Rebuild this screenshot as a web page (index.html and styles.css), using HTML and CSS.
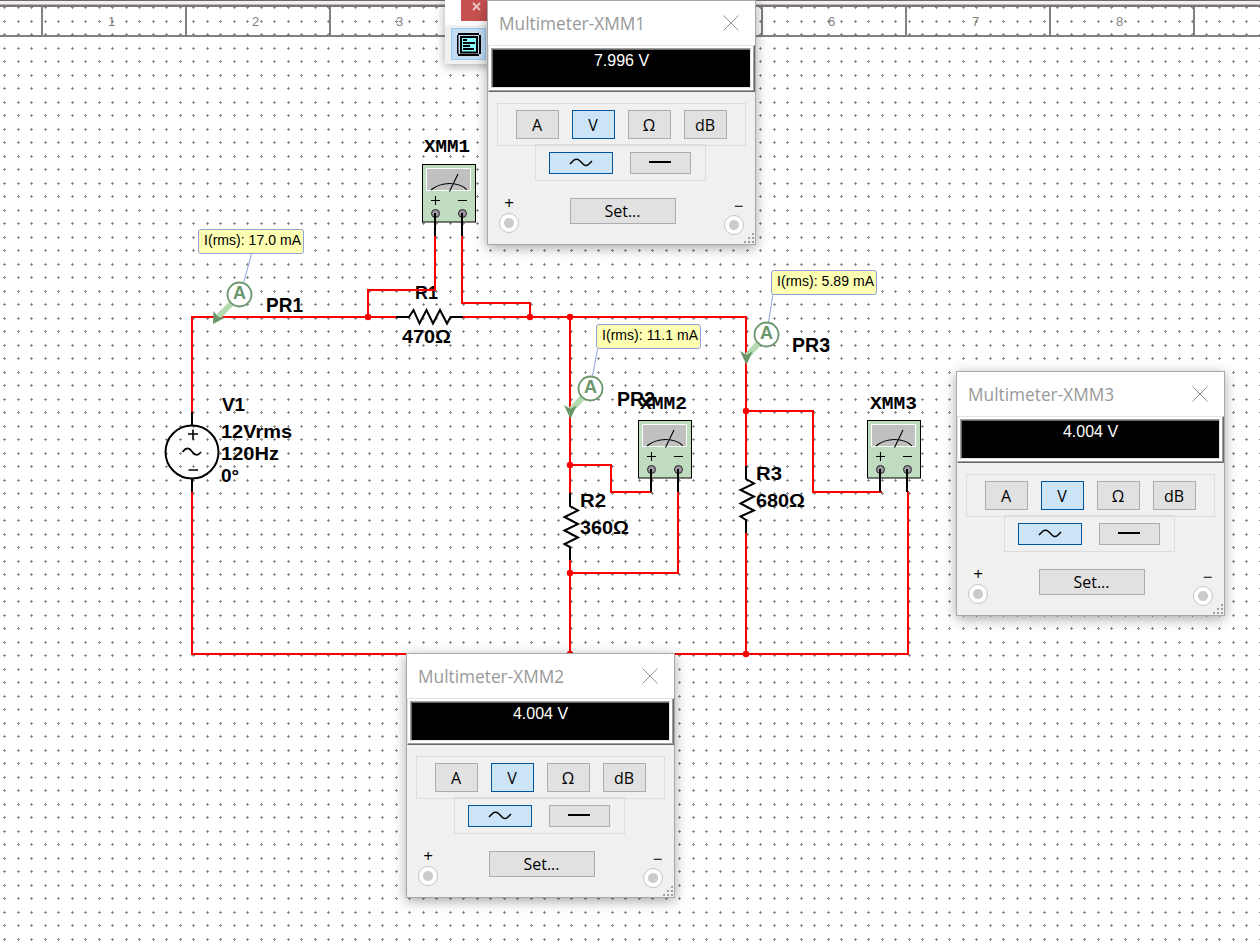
FILE: index.html
```html
<!DOCTYPE html>
<html lang="en">
<head>
    <meta charset="UTF-8">
    <meta name="viewport" content="width=device-width, initial-scale=1.0">
    <title>Circuit - Multimeter readings</title>
    <link rel="stylesheet" href="styles.css">
</head>
<body>

<div class="sheet">

    <svg class="schematic" width="1260" height="947">
        <defs>
            <pattern id="grid" width="27" height="27" patternUnits="userSpaceOnUse">
                <path class="dot" d="M3 7h3v1h-3z M4 6h1v3h-1z M17 7h3v1h-3z M18 6h1v3h-1z M3 21h3v1h-3z M4 20h1v3h-1z M17 21h3v1h-3z M18 20h1v3h-1z"/>
            </pattern>
            <g id="meter">
                <rect class="meter-box" x="0.5" y="0.5" width="53" height="57.500"/>
                <rect class="meter-screen" x="4.5" y="4.5" width="44" height="22"/>
                <path class="thin" d="M9 26 Q17 19.5 27.5 19.5 Q39 19.5 45 26 M36 10 L27.5 27.5"/>
                <path class="thin" d="M9 36.5h9 M13.500 32v9 M36 36.5h9"/>
                <circle class="pin" cx="13.500" cy="49.500" r="4"/>
                <circle class="pin" cx="40.500" cy="49.500" r="4"/>
                <path class="lead" d="M13 49V72 M40 49V72"/>
            </g>
        </defs>

        <rect width="1260" height="947" fill="url(#grid)"/>

        <!-- part names and values -->
        <g class="label">
            <text x="415" y="299" textLength="23" lengthAdjust="spacingAndGlyphs">R1</text>
            <text x="402" y="343" textLength="49" lengthAdjust="spacingAndGlyphs">470Ω</text>
            <text x="222" y="410.500" textLength="23" lengthAdjust="spacingAndGlyphs">V1</text>
            <text x="221" y="437.500" textLength="71" lengthAdjust="spacingAndGlyphs">12Vrms</text>
            <text x="221" y="460" textLength="58" lengthAdjust="spacingAndGlyphs">120Hz</text>
            <text x="221" y="482">0°</text>
            <text x="580" y="506.500" textLength="26" lengthAdjust="spacingAndGlyphs">R2</text>
            <text x="580" y="533.500" textLength="49" lengthAdjust="spacingAndGlyphs">360Ω</text>
            <text x="756" y="479.500" textLength="26" lengthAdjust="spacingAndGlyphs">R3</text>
            <text x="756" y="506.500" textLength="49" lengthAdjust="spacingAndGlyphs">680Ω</text>
        </g>
        <g class="label probe-name">
            <text x="266" y="311.500" textLength="37" lengthAdjust="spacingAndGlyphs">PR1</text>
            <text x="617" y="405.500" textLength="38" lengthAdjust="spacingAndGlyphs">PR2</text>
            <text x="792" y="351.500" textLength="38" lengthAdjust="spacingAndGlyphs">PR3</text>
        </g>
        <g class="meter-name">
            <text x="424" y="152" textLength="46" lengthAdjust="spacingAndGlyphs">XMM1</text>
            <text x="640" y="409" textLength="47" lengthAdjust="spacingAndGlyphs">XMM2</text>
            <text x="870" y="409" textLength="47" lengthAdjust="spacingAndGlyphs">XMM3</text>
        </g>

        <!-- wires -->
        <g class="wire">
            <path d="M192 412V317H396 M462 317H746V467 M746 532V654 M192 492V654H908V491"/>
            <path d="M368 317V290H435V236 M462 236V303H530V317"/>
            <path d="M570 317V494 M570 559V654 M570 465H611V492H652 M678 491V573H570"/>
            <path d="M746 411H813V492H882"/>
        </g>
        <g class="junction">
            <circle cx="368" cy="317" r="3.2"/>
            <circle cx="530" cy="317" r="3.2"/>
            <circle cx="570" cy="317" r="3.2"/>
            <circle cx="570" cy="465" r="3.2"/>
            <circle cx="570" cy="573" r="3.2"/>
            <circle cx="570" cy="654" r="3.2"/>
            <circle cx="746" cy="411" r="3.2"/>
            <circle cx="746" cy="654" r="3.2"/>
        </g>

        <!-- resistors -->
        <g class="part">
            <path d="M396 317H409L413.500 310L419.500 323.500L426.500 310L433 323.500L440 310L447 323.500L450.500 317H463"/>
            <path d="M570 493V506L578 510.500L564.500 517L578 524L564.500 530.500L578 537.500L564.500 544L570 547V560"/>
            <path d="M746 466V479L754 483.500L740.500 490L754 496.500L740.500 503.500L754 510.500L740.500 516.500L746 520V533"/>
        </g>

        <!-- voltage source -->
        <g class="part">
            <circle cx="192" cy="452" r="26.500"/>
            <path d="M192 412V426 M192 478V492"/>
            <path class="fine" d="M188 434h10 M193 429.500v10 M188.500 470h9.500"/>
            <path class="fine" d="M182.500 452Q187.500 445 192 451.500T201 452"/>
        </g>

        <use href="#meter" x="422" y="164"/>
        <use href="#meter" x="638" y="420"/>
        <use href="#meter" x="867" y="420"/>

        <!-- current probes -->
        <g class="probe">
            <path class="stem" d="M231 304L218 317"/>
            <path class="tip" d="M213.500 311L218 317L225.500 317.500L213 324Z"/>
            <circle cx="239.500" cy="294.500" r="12"/>
            <text x="239.500" y="299">A</text>
            <path class="leader" d="M251.500 254L243.500 283"/>
            <rect x="198.500" y="229.500" width="105" height="24" rx="2.500"/>
            <text class="reading" x="204" y="245" textLength="97">I(rms): 17.0 mA</text>
        </g>
        <g class="probe">
            <path class="stem" d="M582 398L571 410"/>
            <path class="tip" d="M564 405L570.500 409L576.500 405.500L570.500 419Z"/>
            <circle cx="590.500" cy="388.500" r="12"/>
            <text x="590.500" y="393">A</text>
            <path class="leader" d="M597.500 349L592.500 376"/>
            <rect x="596.500" y="324.500" width="104" height="24" rx="2.500"/>
            <text class="reading" x="602" y="340" textLength="96">I(rms): 11.1 mA</text>
        </g>
        <g class="probe">
            <path class="stem" d="M758 344L747 356"/>
            <path class="tip" d="M740 351L746.500 355L752.500 351.500L746.500 365Z"/>
            <circle cx="766.500" cy="334.500" r="12"/>
            <text x="766.500" y="339">A</text>
            <path class="leader" d="M773 294L768.500 322"/>
            <rect x="771.500" y="270.500" width="105" height="24" rx="2.500"/>
            <text class="reading" x="777" y="286" textLength="97">I(rms): 5.89 mA</text>
        </g>
    </svg>

    <div class="top-edge"></div>
    <div class="ruler">
        <span></span>
        <span>1</span>
        <span>2</span>
        <span>3</span>
        <span></span>
        <span></span>
        <span>6</span>
        <span>7</span>
        <span>8</span>
        <span></span>
    </div>

    <div class="toolbar">
        <div class="toolbar-close">
            <svg width="31" height="21"><path d="M12 3L19 10M19 3L12 10"/></svg>
        </div>
        <div class="toolbar-button">
            <svg width="24" height="24">
                <path d="M1 0h21v2h-21z M1 21h21v2h-21z M0 2h1.500v19h-1.500z M22 2h2v19h-2z"/>
                <path class="frame" d="M4 4h16v15.500h-16z"/>
                <path d="M6 6h4v2h-4z M6 9h12v2h-12z M6 12h7v2h-7z M6 15h11v2h-11z"/>
            </svg>
        </div>
    </div>

    <div class="window xmm1">
        <div class="titlebar">
            <span class="title">Multimeter-XMM1</span>
            <svg class="close" width="16" height="16"><path d="M.5 .5L15.500 15.500M15.500 .5L.5 15.500"/></svg>
        </div>
        <div class="display"><div class="value">7.996 V</div></div>
        <div class="group modes">
            <button>A</button>
            <button class="on">V</button>
            <button>Ω</button>
            <button>dB</button>
        </div>
        <div class="group signal">
            <button class="ac on"><svg width="24" height="10"><path d="M1 6L4.500 2.500Q7.500 0 10.500 2.500L14.500 6.500Q17 8.500 19.500 6.500L23 3"/></svg></button>
            <button class="dc"><svg width="24" height="10"><path class="bar" d="M1 4H23"/></svg></button>
        </div>
        <div class="terminals">
            <div class="jack"><span>+</span><i></i></div>
            <button class="set">Set...</button>
            <div class="jack minus"><span>−</span><i></i></div>
        </div>
        <svg class="grip" width="10" height="10"><path d="M8 0h2v2h-2z M4 4h2v2h-2z M8 4h2v2h-2z M0 8h2v2h-2z M4 8h2v2h-2z M8 8h2v2h-2z"/></svg>
    </div>

    <div class="window xmm2">
        <div class="titlebar">
            <span class="title">Multimeter-XMM2</span>
            <svg class="close" width="16" height="16"><path d="M.5 .5L15.500 15.500M15.500 .5L.5 15.500"/></svg>
        </div>
        <div class="display"><div class="value">4.004 V</div></div>
        <div class="group modes">
            <button>A</button>
            <button class="on">V</button>
            <button>Ω</button>
            <button>dB</button>
        </div>
        <div class="group signal">
            <button class="ac on"><svg width="24" height="10"><path d="M1 6L4.500 2.500Q7.500 0 10.500 2.500L14.500 6.500Q17 8.500 19.500 6.500L23 3"/></svg></button>
            <button class="dc"><svg width="24" height="10"><path class="bar" d="M1 4H23"/></svg></button>
        </div>
        <div class="terminals">
            <div class="jack"><span>+</span><i></i></div>
            <button class="set">Set...</button>
            <div class="jack minus"><span>−</span><i></i></div>
        </div>
        <svg class="grip" width="10" height="10"><path d="M8 0h2v2h-2z M4 4h2v2h-2z M8 4h2v2h-2z M0 8h2v2h-2z M4 8h2v2h-2z M8 8h2v2h-2z"/></svg>
    </div>

    <div class="window xmm3">
        <div class="titlebar">
            <span class="title">Multimeter-XMM3</span>
            <svg class="close" width="16" height="16"><path d="M.5 .5L15.500 15.500M15.500 .5L.5 15.500"/></svg>
        </div>
        <div class="display"><div class="value">4.004 V</div></div>
        <div class="group modes">
            <button>A</button>
            <button class="on">V</button>
            <button>Ω</button>
            <button>dB</button>
        </div>
        <div class="group signal">
            <button class="ac on"><svg width="24" height="10"><path d="M1 6L4.500 2.500Q7.500 0 10.500 2.500L14.500 6.500Q17 8.500 19.500 6.500L23 3"/></svg></button>
            <button class="dc"><svg width="24" height="10"><path class="bar" d="M1 4H23"/></svg></button>
        </div>
        <div class="terminals">
            <div class="jack"><span>+</span><i></i></div>
            <button class="set">Set...</button>
            <div class="jack minus"><span>−</span><i></i></div>
        </div>
        <svg class="grip" width="10" height="10"><path d="M8 0h2v2h-2z M4 4h2v2h-2z M8 4h2v2h-2z M0 8h2v2h-2z M4 8h2v2h-2z M8 8h2v2h-2z"/></svg>
    </div>

</div>

</body>
</html>
```

FILE: styles.css
```css
* {
    box-sizing: border-box;
}
body {
    margin: 0;
    font-family: "Liberation Sans", Arial, sans-serif;
    background: #fff;
}
.sheet {
    position: relative;
    width: 1260px;
    height: 947px;
    overflow: hidden;
}

/* schematic */
.schematic {
    position: absolute;
    left: 0;
    top: 0;
}
.dot {
    fill: #8c8c8c;
    shape-rendering: crispEdges;
}
.wire path {
    fill: none;
    stroke: #ff0000;
    stroke-width: 2;
}
.junction circle {
    fill: #ff0000;
}
.part path, .part circle {
    fill: none;
    stroke: #000;
    stroke-width: 2;
}
.part .fine {
    stroke-width: 1.6;
}
.label text {
    font-size: 19px;
    font-weight: bold;
}
.probe-name text {
    font-size: 20px;
}
.meter-name text {
    font: bold 18px "Liberation Mono", "Courier New", monospace;
}
.meter-box {
    fill: #c0dcc0;
    stroke: #000;
}
.meter-screen {
    fill: #c0c0c0;
    stroke: #fff;
}
.thin {
    fill: none;
    stroke: #000;
    stroke-width: 1.1;
}
.pin {
    fill: #9a949e;
    stroke: #222;
}
.lead {
    stroke: #000;
    stroke-width: 2;
}
.probe circle {
    fill: #fff;
    stroke: #6b966b;
    stroke-width: 1.8;
}
.probe text {
    font-size: 18px;
    font-weight: bold;
    text-anchor: middle;
    fill: #6b966b;
}
.probe .stem {
    stroke: #b4dab0;
    stroke-width: 6;
}
.probe .tip {
    fill: #6b966b;
}
.probe .leader {
    stroke: #92a4dc;
}
.probe rect {
    fill: #ffffb4;
    stroke: #8ea2d8;
}
.probe .reading {
    font-size: 14px;
    font-weight: normal;
    text-anchor: start;
    fill: #000;
}

/* sheet border */
.top-edge {
    position: relative;
    height: 7px;
    background: #f3eef2;
    border-top: 1px solid #6f696d;
    border-bottom: 2px solid #787477;
    box-shadow: inset 0 -1px #bbb7ba;
}
.ruler {
    position: relative;
    display: flex;
    height: 30px;
    border-bottom: 2px solid #808080;
}
.ruler span {
    flex: none;
    width: 144px;
    border-left: 2px solid #808080;
    padding-right: 5px;
    text-align: center;
    font-size: 13px;
    line-height: 29px;
    color: #808080;
}
.ruler span:first-child {
    width: 41px;
    border-left: none;
}

/* instrument toolbar */
.toolbar {
    position: absolute;
    left: 445px;
    top: 0;
    width: 60px;
    height: 64px;
    padding-left: 6px;
    background: linear-gradient(#fff 25px, #f0f0f0 25px);
    box-shadow: 0 2px 10px rgba(0, 0, 0, 0.35);
}
.toolbar-close {
    width: 31px;
    height: 21px;
    margin-left: 10px;
    background: #c75050;
}
.toolbar-close path {
    stroke: #edc4c4;
    stroke-width: 2;
}
.toolbar-button {
    width: 35px;
    height: 32px;
    margin-top: 7px;
    padding: 4px 5px;
    border: 1px solid #90c8f6;
    background: #c2dcf3;
}
.toolbar-button svg {
    display: block;
}
.toolbar-button .frame {
    fill: #8ff;
    stroke: #000;
    stroke-width: 2;
}

/* multimeter windows */
.window {
    position: absolute;
    width: 269px;
    height: 245px;
    border: 1px solid #a8a8a8;
    background: #f0f0f0;
    box-shadow: 0 3px 12px rgba(0, 0, 0, 0.35);
}
.xmm1 {
    left: 487px;
    top: 0;
}
.xmm2 {
    left: 406px;
    top: 653px;
}
.xmm3 {
    left: 956px;
    top: 371px;
}
.titlebar {
    display: flex;
    justify-content: space-between;
    align-items: center;
    height: 44px;
    padding: 0 16px 1px 11px;
    background: #fff;
}
.title {
    padding-top: 1px;
    font: 17.3px "Open Sans", "Noto Sans", sans-serif;
    color: #999;
}
.close path {
    stroke: #909090;
}
.display {
    height: 47px;
    padding: 2px 3px 3px 2px;
    border: 1px solid;
    border-color: #e3e3e3 #696969 #696969 #e3e3e3;
    background: #fff;
    box-shadow: inset -1px -1px #a0a0a0;
}
.value {
    height: 40px;
    padding-left: 1px;
    border: 1px solid;
    border-color: #a0a0a0 #e3e3e3 #e3e3e3 #a0a0a0;
    box-shadow: inset 1px 1px #696969;
    background: #000;
    color: #fff;
    font-size: 16px;
    line-height: 24px;
    text-align: center;
}
.group {
    display: flex;
    border: 1px solid #dcdcdc;
}
.modes {
    width: 249px;
    height: 43px;
    margin: 11px 0 0 9px;
    padding: 6px 18px;
    gap: 13px;
}
.signal {
    width: 171px;
    height: 37px;
    margin: -2px 0 0 47px;
    padding: 7px 13px;
    gap: 17px;
}
button {
    width: 43px;
    height: 29px;
    padding: 0 1px 0 0;
    border: 1px solid #adadad;
    background: #e1e1e1;
    color: #000;
    font: 16px/26px "Open Sans", "Noto Sans", sans-serif;
}
button.on {
    border-color: #00559b;
    background: #cce4f7;
}
.signal button {
    height: 22px;
    line-height: 0;
}
.signal .ac {
    width: 64px;
}
.signal .dc {
    width: 61px;
}
.signal path {
    fill: none;
    stroke: #000;
    stroke-width: 1.5;
}
.signal .bar {
    stroke-width: 2;
}
.terminals {
    display: flex;
    padding: 0 11px;
}
.set {
    width: 106px;
    height: 26px;
    margin: 17px 0 0 51px;
    line-height: 23px;
}
.jack {
    width: 20px;
    padding-top: 12px;
    text-align: center;
}
.jack span {
    display: block;
    height: 20px;
    font: 17px/19px "Open Sans", "Noto Sans", sans-serif;
}
.jack i {
    display: block;
    width: 20px;
    height: 20px;
    border: 1px solid #c4c4c4;
    border-radius: 50%;
    background: radial-gradient(circle, #cbcbcb 4.5px, #fff 5.5px);
}
.minus {
    margin-left: auto;
    padding-top: 14px;
}
.minus span {
    margin-left: 9px;
    line-height: 22px;
}
.grip {
    position: absolute;
    right: 1px;
    bottom: 1px;
    fill: #a0a0a0;
}
```
